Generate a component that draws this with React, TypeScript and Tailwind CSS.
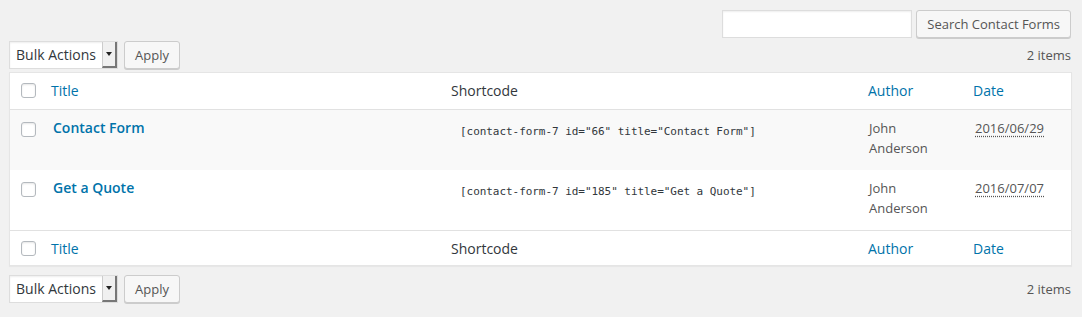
import React from "react";

const sans = { fontFamily: '"Open Sans", "Noto Sans", sans-serif' };

function Checkbox() {
  return (
    <span className="block w-[15px] h-[15px] rounded-[3px] border border-[#b4b9be] bg-white shadow-[inset_0_1px_2px_rgba(0,0,0,0.1)]" />
  );
}

function BulkBar() {
  return (
    <div className="flex items-start h-[28px]">
      <div className="flex items-stretch h-[28px] w-[109px] bg-white border border-[#ddd] shadow-[inset_0_1px_2px_rgba(0,0,0,0.07)]">
        <span className="flex-1 pl-[6px] text-[14px] leading-[26px] text-[#32373c]">Bulk Actions</span>
        <span className="w-[15px] flex items-center justify-center bg-[#f0f0f0] border-l border-[#ccc] border-r-2 border-b-2 border-r-[#777] border-b-[#777]">
          <span className="w-0 h-0 border-l-[3px] border-r-[3px] border-t-[4px] border-l-transparent border-r-transparent border-t-[#222]" />
        </span>
      </div>
      <button className="ml-[6px] h-[28px] px-[10px] rounded-[3px] border border-[#ccc] bg-[#f7f7f7] text-[13px] text-[#555] shadow-[0_1px_0_#ccc] leading-[26px]">
        Apply
      </button>
      <span className="ml-auto pr-[2px] text-[13px] leading-[28px] text-[#555]">2 items</span>
    </div>
  );
}

const grid = "grid grid-cols-[31px_400px_417px_105px_1fr]";

function HeadRow({ top }: { top?: boolean }) {
  return (
    <div className={`${grid} ${top ? "h-[37px] border-b pb-[1px]" : "h-[35px] border-t"} items-center text-[14px] border-[#e1e1e1]`}>
      <div className="pl-[11px]"><Checkbox /></div>
      <div className="pl-[10px] text-[#0073aa]">Title</div>
      <div className="pl-[10px] text-[#32373c]">Shortcode</div>
      <div className="pl-[10px] text-[#0073aa]">Author</div>
      <div className="pl-[10px] text-[#0073aa]">Date</div>
    </div>
  );
}

function Row({ title, code, date, alt }: { title: string; code: string; date: string; alt?: boolean }) {
  return (
    <div className={`${grid} h-[60px] items-start ${alt ? "bg-[#f9f9f9]" : "bg-white"}`}>
      <div className="pl-[11px] pt-[12px]"><Checkbox /></div>
      <div className="pl-[12px] pt-[8px] text-[14px] leading-[20px] font-semibold text-[#0073aa]">{title}</div>
      <div
        className="pl-[19px] pt-[13px] text-[11px] leading-[18px] text-[#32373c] tracking-[-0.05px]"
        style={{ fontFamily: '"DejaVu Sans Mono", "Liberation Mono", monospace' }}
      >
        {code}
      </div>
      <div className="pl-[11px] pt-[8px] text-[13px] leading-[20px] text-[#555]">
        John
        <br />
        Anderson
      </div>
      <div className="pl-[12px] pt-[8px] text-[13px] leading-[20px] text-[#555]">
        <span className="underline decoration-dotted decoration-[#555] underline-offset-[3px]">{date}</span>
      </div>
    </div>
  );
}

export default function App() {
  return (
    <div className="w-[1082px] h-[317px] bg-[#f1f1f1] px-[9px] pt-[10px]" style={sans}>
      <div className="flex justify-end items-start h-[31px] pr-[2px]">
        <div className="w-[190px] h-[28px] bg-white border border-[#ddd] shadow-[inset_0_1px_2px_rgba(0,0,0,0.07)]" />
        <button className="ml-[4px] h-[28px] px-[10px] rounded-[3px] border border-[#ccc] bg-[#f7f7f7] text-[13px] text-[#555] shadow-[0_1px_0_#ccc] leading-[26px]">
          Search Contact Forms
        </button>
      </div>
      <BulkBar />
      <div className="mt-[3px] w-[1063px] bg-white border border-[#e5e5e5] shadow-[0_1px_1px_rgba(0,0,0,0.04)]">
        <HeadRow top />
        <Row title="Contact Form" code={'[contact-form-7 id="66" title="Contact Form"]'} date="2016/06/29" alt />
        <Row title="Get a Quote" code={'[contact-form-7 id="185" title="Get a Quote"]'} date="2016/07/07" />
        <HeadRow />
      </div>
      <div className="mt-[9px]">
        <BulkBar />
      </div>
    </div>
  );
}
